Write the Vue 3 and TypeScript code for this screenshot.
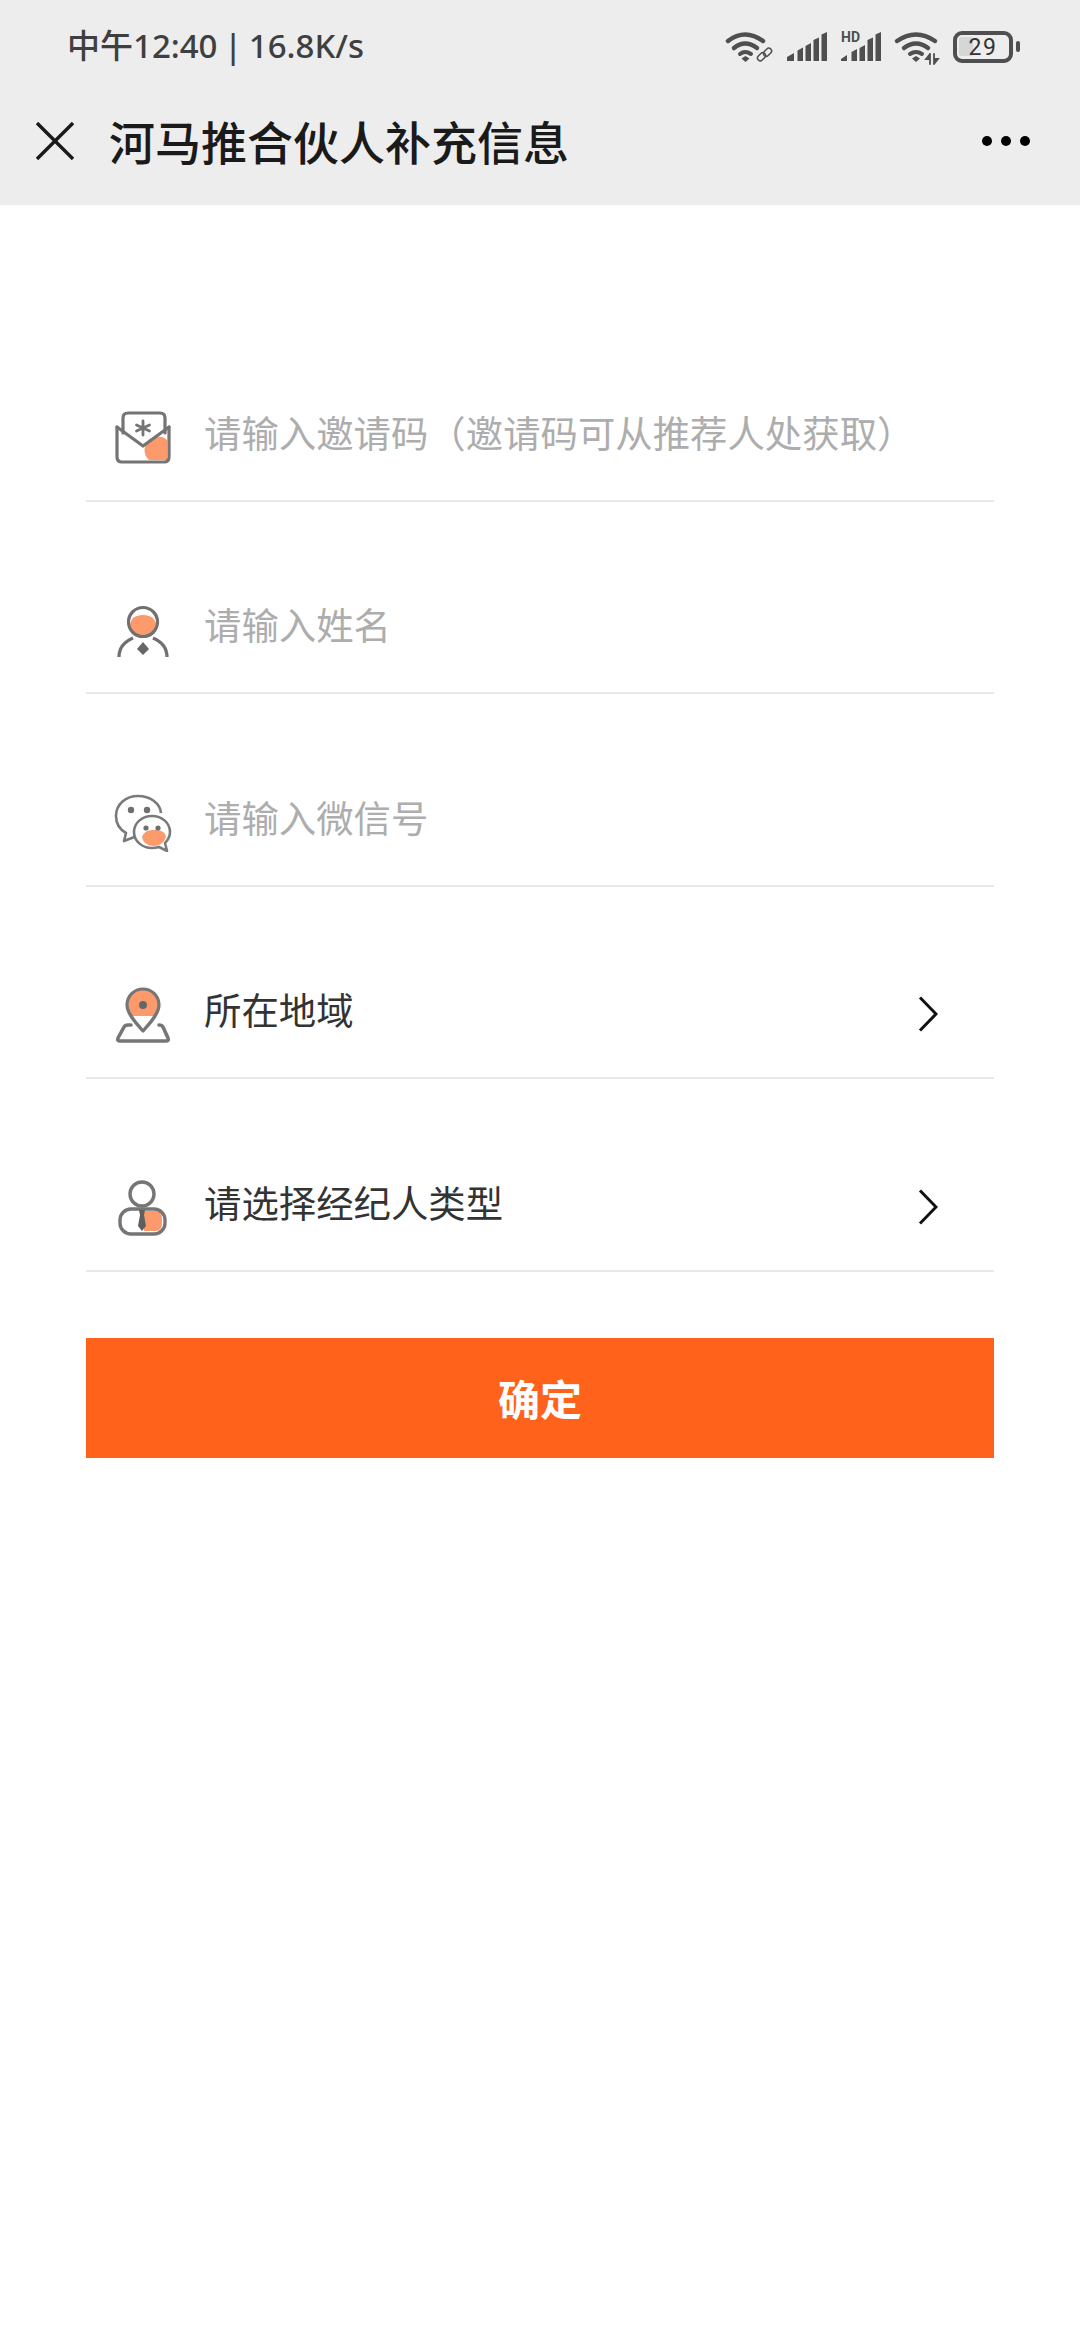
<script setup lang="ts">
interface Field {
  id: string
  label: string
  placeholder: boolean
  arrow: boolean
}

const fields: Field[] = [
  { id: 'invite', label: '请输入邀请码（邀请码可从推荐人处获取）', placeholder: true, arrow: false },
  { id: 'name', label: '请输入姓名', placeholder: true, arrow: false },
  { id: 'wechat', label: '请输入微信号', placeholder: true, arrow: false },
  { id: 'region', label: '所在地域', placeholder: false, arrow: true },
  { id: 'type', label: '请选择经纪人类型', placeholder: false, arrow: true }
]
</script>

<template>
  <div class="page">
    <header class="header">
      <div class="status">
        <span class="clock">中午12:40 | 16.8K/s</span>
        <div class="status-icons">
          <svg width="48" height="32" viewBox="0 0 48 32" fill="none" stroke="#4f4f4f" stroke-linecap="round">
            <path d="M3 10Q20 -3 38 10" stroke-width="4.5" />
            <path d="M9 17Q20 8 32 17" stroke-width="4.5" />
            <path d="M15 23Q20 19 26 23" stroke-width="4" />
            <path d="M16.5 27.5L20.5 25L24.5 27.5L20.5 31Z" fill="#4f4f4f" stroke="none" />
            <rect x="32" y="23" width="9" height="5.5" rx="2.7" transform="rotate(-45 36.5 25.7)" stroke-width="1.5" />
            <rect x="38" y="18.5" width="9" height="5.5" rx="2.7" transform="rotate(-45 42.5 21.2)" stroke-width="1.5" />
          </svg>
          <svg width="40" height="32" viewBox="0 0 40 32" fill="#4f4f4f">
            <path d="M0 26L7 22V30H0Z" />
            <path d="M10.500 19.500L16 16.500V30H10.500Z" />
            <path d="M18.500 15L24 12V30H18.500Z" />
            <path d="M26.500 9L32 6.500V30H26.500Z" />
            <path d="M34.500 3.500L40 1V30H34.500Z" />
          </svg>
          <svg class="hd-signal" width="40" height="32" viewBox="0 0 40 32" fill="#4f4f4f">
            <text x="0" y="11" class="hd">HD</text>
            <path d="M0 28L6 24V30H0Z" />
            <path d="M10.500 21L16 18V30H10.500Z" />
            <path d="M18.500 17L24 14V30H18.500Z" />
            <path d="M26.500 9L32 6.500V30H26.500Z" />
            <path d="M34.500 3.500L40 1V30H34.500Z" />
          </svg>
          <svg width="44" height="34" viewBox="0 0 44 34" fill="none" stroke="#4f4f4f" stroke-linecap="round">
            <path d="M2 10Q21 -3 40 10" stroke-width="4.5" />
            <path d="M9 17Q21 8 33 17" stroke-width="4.5" />
            <path d="M15 23Q21 19 27 23" stroke-width="4" />
            <path d="M17 27.5L21 25L25 27.5L21 31Z" fill="#4f4f4f" stroke="none" />
            <path d="M35 23V33M35 23L31 28H35" stroke-width="1.8" fill="#4f4f4f" />
            <path d="M39 23V33M39 33L43 28H39" stroke-width="1.8" fill="#4f4f4f" />
          </svg>
          <svg width="67" height="32" viewBox="0 0 67 32" fill="none">
            <rect x="6" y="6" width="14" height="19" rx="2" fill="#d6d6d6" />
            <rect x="2" y="2" width="56" height="28" rx="7" stroke="#4f4f4f" stroke-width="4" />
            <rect x="63" y="10" width="4" height="11" rx="2" fill="#4f4f4f" />
            <text x="30" y="24" class="battery">29</text>
          </svg>
        </div>
      </div>
      <nav class="nav">
        <svg class="close" width="38" height="38" viewBox="0 0 38 38" fill="none" stroke="#1a1a1a" stroke-width="3.4">
          <path d="M1 1L37 37M37 1L1 37" />
        </svg>
        <h1 class="title">河马推合伙人补充信息</h1>
        <div class="more">
          <i></i><i></i><i></i>
        </div>
      </nav>
    </header>

    <main class="form">
      <div v-for="field in fields" :key="field.id" class="row">
        <svg v-if="field.id === 'invite'" class="icon" width="60" height="60" viewBox="0 0 60 60" fill="none" stroke="#747474" stroke-width="3.2" stroke-linejoin="round" stroke-linecap="round">
          <path d="M54 33A12.200 12.200 0 0 0 36 53H54Z" fill="#fd9a6c" stroke="none" />
          <path d="M10 26V11Q10 6 15 6H47Q52 6 52 11V26" />
          <path d="M4 20V50Q4 55 9 55H51Q56 55 56 50V20" />
          <path d="M4 20L30 39L56 20" />
          <path d="M30 14V28M23.500 18L36.500 24M36.500 18L23.500 24" stroke-width="2.800" />
        </svg>
        <svg v-else-if="field.id === 'name'" class="icon" width="60" height="60" viewBox="0 0 60 60" fill="none" stroke="#707070" stroke-width="3.200" stroke-linecap="butt">
          <path d="M17 26Q18 16 30 16Q42 16 43 26Q42 35 30 36Q18 35 17 26Z" fill="#fd9a6c" stroke="none" />
          <circle cx="30" cy="23" r="14.500" />
          <path d="M6 58C6 48 13 42 20 39M54 58C54 48 47 42 40 39" />
          <path d="M30 43L36 50L30 56L24 50Z" fill="#666" stroke="none" />
        </svg>
        <svg v-else-if="field.id === 'wechat'" class="icon" width="60" height="60" viewBox="0 0 60 60" fill="none" stroke="#7a7a7a" stroke-width="2.600" stroke-linejoin="round">
          <path d="M24 44L11 49L13 41C6 37 3 31 3 24C3 12 13 4 25 4C37 4 47 11 48 21" />
          <path d="M39 24C29 24 21 31 21 40C21 49 29 56 39 56C42 56 44 55.500 46 55L54 59L52 51C55 48 57 44 57 40C57 31 49 24 39 24Z" fill="#fff" />
          <path d="M29 45C31 39 36 38 41 38C47 38 52 39 53 45C51 51 46 54 41 54C35 54 30 51 29 45Z" fill="#fd9a6c" stroke="none" />
          <circle cx="18" cy="18" r="3.200" fill="#6f6f6f" stroke="none" />
          <circle cx="34" cy="18" r="3.200" fill="#6f6f6f" stroke="none" />
          <circle cx="33" cy="36" r="2.600" fill="#6f6f6f" stroke="none" />
          <circle cx="45" cy="36" r="2.600" fill="#6f6f6f" stroke="none" />
        </svg>
        <svg v-else-if="field.id === 'region'" class="icon" width="60" height="60" viewBox="0 0 60 60" fill="none" stroke="#767676" stroke-width="3.200" stroke-linejoin="round" stroke-linecap="round">
          <path d="M15 21A15 15 0 0 1 45 21Q45 26 41 32H19Q15 26 15 21Z" fill="#fd9a6c" stroke="none" />
          <path d="M14 21A16 16 0 0 1 46 21C46 30 36 40 30 47C24 40 14 30 14 21Z" />
          <circle cx="30" cy="21" r="4" fill="#666" stroke="none" />
          <path d="M18 41H15Q12 41 11 43L5 54Q4 57 7 57H53Q56 57 55 54L50 43Q49 41 46 41" stroke-width="3.600" />
        </svg>
        <svg v-else class="icon" width="60" height="60" viewBox="0 0 60 60" fill="none" stroke="#757575" stroke-width="3.400">
          <path d="M31 34H42Q49 34 49 42V47Q49 54 42 54H31Z" fill="#fd9a6c" stroke="none" />
          <circle cx="29" cy="17" r="12" />
          <rect x="7" y="32" width="45" height="25" rx="11" />
          <path d="M26 33H32L31 38L33 49L29 54L25 49L27 38Z" fill="#5f5f5f" stroke="none" />
        </svg>
        <span class="label" :class="{ placeholder: field.placeholder }">{{ field.label }}</span>
        <svg v-if="field.arrow" class="chevron" width="20" height="36" viewBox="0 0 20 36" fill="none" stroke="#111" stroke-width="3">
          <path d="M2 1.500L18 18L2 34.500" />
        </svg>
      </div>

      <button class="confirm" type="button">确定</button>
    </main>
  </div>
</template>

<style scoped>
.page {
  width: 1080px;
  min-height: 2340px;
  background: #fff;
  font-family: "Noto Sans CJK SC", "Noto Sans", sans-serif;
}

.header {
  height: 205px;
  background: #ededed;
}

.status {
  height: 94px;
  display: flex;
  align-items: center;
  justify-content: space-between;
  padding: 0 60px 0 67px;
}

.clock {
  font-family: "Noto Sans", "Noto Sans CJK SC", sans-serif;
  font-size: 33px;
  font-weight: 500;
  line-height: 44px;
  padding-bottom: 2px;
  word-spacing: -2px;
  color: #3f3f3f;
}

.status-icons {
  display: flex;
  align-items: flex-start;
  gap: 14px;
  padding-top: 2px;
}

.status-icons svg {
  overflow: visible;
}

.hd {
  font-family: Roboto, sans-serif;
  font-size: 14px;
  font-weight: 700;
}

.battery {
  font-family: Roboto, sans-serif;
  font-size: 23px;
  fill: #333;
  letter-spacing: 1.5px;
  text-anchor: middle;
}

.nav {
  height: 93px;
  display: flex;
  align-items: center;
  padding-left: 36px;
  padding-right: 50px;
}

.close {
  flex: none;
}

.title {
  margin: 0 0 0 35px;
  padding-bottom: 2px;
  font-size: 46px;
  font-weight: 500;
  color: #1a1a1a;
  white-space: nowrap;
}

.more {
  margin-left: auto;
  display: flex;
  gap: 9px;
}

.more i {
  width: 10px;
  height: 10px;
  border-radius: 50%;
  background: #000;
}

.form {
  display: flex;
  flex-direction: column;
  padding: 104px 86px 0;
}

.row {
  height: 192.600px;
  box-sizing: border-box;
  flex: none;
  display: flex;
  align-items: flex-end;
  padding: 0 56px 33px 27px;
  border-bottom: 2px solid #e8e8e8;
}

.icon {
  flex: none;
}

.label {
  margin-left: 31px;
  height: 60px;
  line-height: 50px;
  font-size: 37.400px;
  color: #333;
  white-space: nowrap;
}

.label.placeholder {
  color: #adadad;
}

.chevron {
  flex: none;
  margin-left: auto;
  margin-bottom: 12px;
}

.confirm {
  margin-top: 66px;
  height: 120px;
  border: 0;
  padding: 0;
  background: #ff631b;
  color: #fff;
  font-family: inherit;
  font-size: 42px;
  font-weight: 700;
}
</style>
